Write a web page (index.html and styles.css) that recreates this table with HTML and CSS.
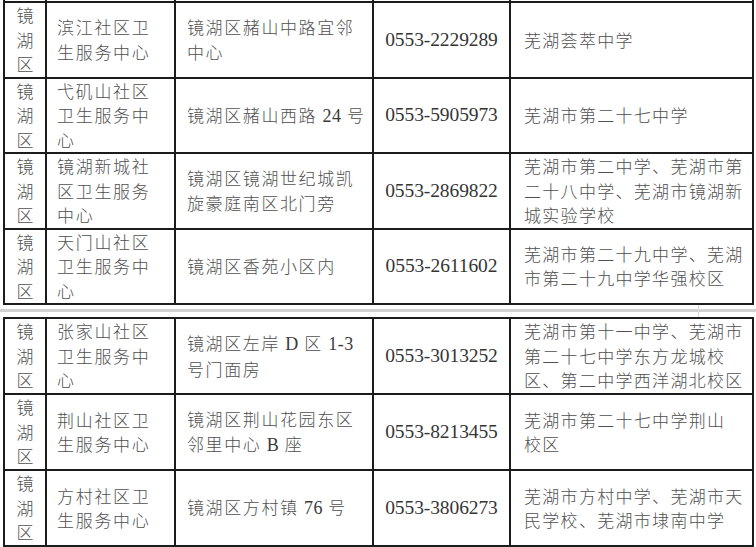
FILE: index.html
```html
<!DOCTYPE html>
<html lang="zh">
<head>
<meta charset="utf-8">
<title>镜湖区社区卫生服务中心</title>
<link rel="stylesheet" href="styles.css">
</head>
<body>
<div class="page">
  <table class="grid">
    <colgroup><col class="c1"><col class="c2"><col class="c3"><col class="c4"><col class="c5"></colgroup>
    <tr class="stub stub-top"><td></td><td></td><td></td><td></td><td></td></tr>
    <tr class="row">
      <td class="dist">镜<br>湖<br>区</td>
      <td class="name">滨江社区卫<br>生服务中心</td>
      <td class="addr">镜湖区赭山中路宜邻<br>中心</td>
      <td class="tel">0553-2229289</td>
      <td class="school">芜湖荟萃中学</td>
    </tr>
    <tr class="row">
      <td class="dist">镜<br>湖<br>区</td>
      <td class="name">弋矶山社区<br>卫生服务中<br>心</td>
      <td class="addr">镜湖区赭山西路 <span class="num">24</span> 号</td>
      <td class="tel">0553-5905973</td>
      <td class="school">芜湖市第二十七中学</td>
    </tr>
    <tr class="row">
      <td class="dist">镜<br>湖<br>区</td>
      <td class="name">镜湖新城社<br>区卫生服务<br>中心</td>
      <td class="addr">镜湖区镜湖世纪城凯<br>旋豪庭南区北门旁</td>
      <td class="tel">0553-2869822</td>
      <td class="school">芜湖市第二中学、芜湖市第<br>二十八中学、芜湖市镜湖新<br>城实验学校</td>
    </tr>
    <tr class="row">
      <td class="dist">镜<br>湖<br>区</td>
      <td class="name">天门山社区<br>卫生服务中<br>心</td>
      <td class="addr">镜湖区香苑小区内</td>
      <td class="tel">0553-2611602</td>
      <td class="school">芜湖市第二十九中学、芜湖<br>市第二十九中学华强校区</td>
    </tr>
  </table>

  <div class="break">
    <div class="break-line"></div>
  </div>

  <table class="grid grid-2">
    <colgroup><col class="c1"><col class="c2"><col class="c3"><col class="c4"><col class="c5"></colgroup>
    <tr class="row row-b">
      <td class="dist">镜<br>湖<br>区</td>
      <td class="name">张家山社区<br>卫生服务中<br>心</td>
      <td class="addr">镜湖区左岸 <span class="num">D</span> 区 <span class="num">1-3</span><br>号门面房</td>
      <td class="tel">0553-3013252</td>
      <td class="school">芜湖市第十一中学、芜湖市<br>第二十七中学东方龙城校<br>区、第二中学西洋湖北校区</td>
    </tr>
    <tr class="row row-b">
      <td class="dist">镜<br>湖<br>区</td>
      <td class="name">荆山社区卫<br>生服务中心</td>
      <td class="addr">镜湖区荆山花园东区<br>邻里中心 <span class="num">B</span> 座</td>
      <td class="tel">0553-8213455</td>
      <td class="school">芜湖市第二十七中学荆山<br>校区</td>
    </tr>
    <tr class="row row-b">
      <td class="dist">镜<br>湖<br>区</td>
      <td class="name">方村社区卫<br>生服务中心</td>
      <td class="addr">镜湖区方村镇 <span class="num">76</span> 号</td>
      <td class="tel">0553-3806273</td>
      <td class="school">芜湖市方村中学、芜湖市天<br>民学校、芜湖市埭南中学</td>
    </tr>
    <tr class="stub stub-bottom"><td></td><td></td><td></td><td></td><td></td></tr>
  </table>
</div>
</body>
</html>
```

FILE: styles.css
```css
html, body {
  margin: 0;
  padding: 0;
  background: #ffffff;
}

body {
  width: 756px;
  height: 547px;
  overflow: hidden;
  font-family: "Noto Sans CJK SC", sans-serif;
  color: #505050;
}

.page {
  padding-left: 3px;
}

.grid {
  border-collapse: collapse;
  table-layout: fixed;
  width: 749px;
}

.c1 { width: 42px; }
.c2 { width: 129px; }
.c3 { width: 198px; }
.c4 { width: 137px; }
.c5 { width: 243px; }

.grid td {
  border: 2px solid #1c1c1c;
  padding: 0;
  vertical-align: middle;
  font-size: 17px;
  line-height: 24.5px;
  font-weight: 300;
  letter-spacing: 1.7px;
  white-space: nowrap;
  overflow: hidden;
}

.num {
  font-family: "Liberation Serif", serif;
  font-size: 18px;
  letter-spacing: 0.5px;
  color: #3a3a3a;
}

.row {
  height: 75.5px;
}

.row-b {
  height: 76px;
}

.stub td {
  height: 1px;
  line-height: 0;
  font-size: 0;
}

.stub-top td {
  border-top: none;
}

.stub-bottom td {
  border-bottom: none;
}

.grid td.dist {
  text-align: center;
  letter-spacing: 0;
}

.grid td.name {
  padding-left: 10px;
}

.grid td.addr {
  padding-left: 11px;
  letter-spacing: 1.6px;
}

.grid td.tel {
  text-align: center;
  font-family: "Liberation Serif", serif;
  font-size: 19.5px;
  letter-spacing: -0.1px;
  color: #353535;
}

.grid td.school {
  padding-left: 13px;
  letter-spacing: 1.3px;
}

.break {
  position: relative;
  height: 12px;
  margin-left: -3px;
}

.break-line {
  position: relative;
  top: 4px;
  height: 3px;
  background: #d2d2d2;
}

.break::after {
  content: "";
  position: absolute;
  left: 698px;
  top: 0;
  width: 1px;
  height: 12px;
  background: #dadada;
}
```
